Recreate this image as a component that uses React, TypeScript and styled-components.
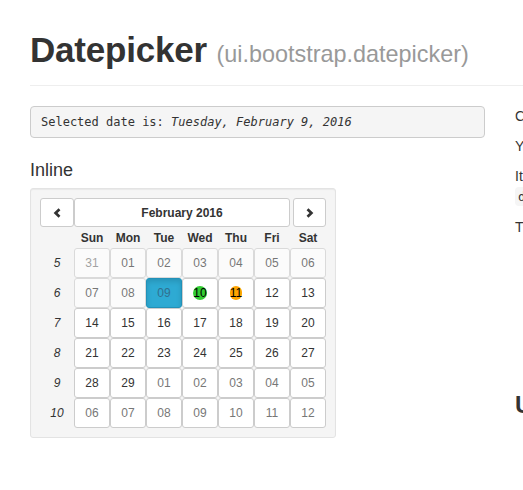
import React from "react";
import styled, { createGlobalStyle, css } from "styled-components";

const GlobalStyle = createGlobalStyle`
  html, body {
    margin: 0;
    overflow: hidden;
  }
  body {
    font-family: "Liberation Sans", Helvetica, Arial, sans-serif;
    font-size: 14px;
    line-height: 20px;
    color: #333;
    background: #fff;
  }
  * {
    box-sizing: border-box;
  }
`;

const Page = styled.div`
  width: 1000px;
  padding: 30px 0 0 30px;
`;

const PageHeader = styled.div`
  padding-bottom: 15px;
  margin-bottom: 20px;
  border-bottom: 1px solid #eee;
`;

const Title = styled.h1`
  margin: 0;
  height: 40px;
  font-size: 35px;
  line-height: 40px;
  font-weight: bold;
  color: #333;
  letter-spacing: -0.2px;

  small {
    font-size: 23.4px;
    line-height: 1;
    font-weight: normal;
    letter-spacing: 0;
    color: #999;
  }
`;

const Row = styled.div`
  display: flex;
  align-items: flex-start;
  gap: 30px;
`;

const Column = styled.div`
  flex: none;
  width: 455px;
`;

const Pre = styled.pre`
  margin: 0;
  padding: 6px 10px;
  background: #f5f5f5;
  border: 1px solid #ccc;
  border-radius: 4px;
  font-family: "DejaVu Sans Mono", Menlo, monospace;
  font-size: 12px;
  line-height: 18px;
  color: #333;
`;

const SectionTitle = styled.h4`
  margin: 22px 0 8px;
  font-size: 18px;
  line-height: 20px;
  font-weight: 500;
`;

const Well = styled.div`
  display: inline-block;
  padding: 9px;
  background: #f5f5f5;
  border: 1px solid #e3e3e3;
  border-radius: 3px;
  box-shadow: inset 0 1px 1px rgba(0, 0, 0, 0.05);
`;

const Calendar = styled.div`
  display: grid;
  grid-template-columns: 34px repeat(7, 36px);
  grid-template-rows: 30px 20px repeat(6, 30px);
`;

const buttonBase = css`
  margin: 0;
  padding: 0;
  background: #fff;
  border: 1px solid #ccc;
  border-radius: 3px;
  font-family: inherit;
  font-size: 12px;
  color: #333;
  cursor: pointer;
`;

const NavButton = styled.button<{ $side: "left" | "right" }>`
  ${buttonBase}
  height: 29px;
  width: ${({ $side }) => ($side === "left" ? "34px" : "33px")};
  justify-self: ${({ $side }) => ($side === "left" ? "start" : "end")};
  display: flex;
  align-items: center;
  justify-content: center;
  padding-top: 1px;
`;

const MonthButton = styled.button`
  ${buttonBase}
  grid-column: span 6;
  height: 29px;
  font-weight: bold;
`;

const DayName = styled.div`
  font-size: 12px;
  font-weight: bold;
  line-height: 20px;
  text-align: center;
`;

const WeekNum = styled.em`
  display: flex;
  align-items: center;
  justify-content: center;
  font-size: 12px;
`;

const DayButton = styled.button<{ $active?: boolean; $disabled?: boolean }>`
  ${buttonBase}
  width: 36px;
  height: 30px;
  ${({ $disabled }) => $disabled && "opacity: 0.65; cursor: not-allowed;"}
  ${({ $active }) =>
    $active &&
    css`
      background: #2eaad3;
      border-color: #2291b8;
      box-shadow: inset 0 3px 5px rgba(0, 0, 0, 0.125);
    `}
`;

const tones = {
  normal: "#333",
  muted: "#777",
  info: "#31708f",
};

const marks = {
  full: "limegreen",
  partially: "orange",
};

const DayLabel = styled.span<{
  $tone: keyof typeof tones;
  $mark?: keyof typeof marks;
}>`
  color: ${({ $tone }) => tones[$tone]};
  ${({ $mark }) =>
    $mark &&
    css`
      background: ${marks[$mark]};
      border-radius: 32px;
      color: #000;
    `}
`;

const Text = styled.p`
  margin: 0 0 10px;
  white-space: nowrap;
`;

const Code = styled.code`
  padding: 2px 3px;
  font-family: "DejaVu Sans Mono", Menlo, monospace;
  font-size: 90%;
  color: #333;
  background: #f5f5f5;
  border-radius: 4px;
`;

const List = styled.ul`
  margin: 0 0 10px;
  padding-left: 40px;
`;

const SubTitle = styled.h3`
  margin: 25px 0 10px;
  font-size: 24px;
  line-height: 26px;
  font-weight: bold;
`;

const Chevron = ({ dir }: { dir: "left" | "right" }) => (
  <svg width="9" height="10" viewBox="0 0 9 10">
    <polyline
      points={dir === "left" ? "6.5,1.3 2.6,5 6.5,8.7" : "2.5,1.3 6.4,5 2.5,8.7"}
      fill="none"
      stroke="#333"
      strokeWidth="2.7"
    />
  </svg>
);

const dayNames = ["Sun", "Mon", "Tue", "Wed", "Thu", "Fri", "Sat"];

interface Day {
  date: Date;
  label: string;
  muted: boolean;
  disabled: boolean;
  active: boolean;
  mark?: keyof typeof marks;
}

const buildWeeks = () => {
  const start = new Date(2016, 0, 31);
  const minDate = new Date(2016, 1, 9);
  const weeks: { num: number; days: Day[] }[] = [];
  for (let w = 0; w < 6; w++) {
    const days: Day[] = [];
    for (let d = 0; d < 7; d++) {
      const date = new Date(start);
      date.setDate(start.getDate() + w * 7 + d);
      const inMonth = date.getMonth() === 1;
      const n = date.getDate();
      days.push({
        date,
        label: String(n).padStart(2, "0"),
        muted: !inMonth,
        disabled: date < minDate,
        active: inMonth && n === 9,
        mark: inMonth && n === 10 ? "full" : inMonth && n === 11 ? "partially" : undefined,
      });
    }
    weeks.push({ num: 5 + w, days });
  }
  return weeks;
};

const weeks = buildWeeks();

export default function App() {
  return (
    <>
      <GlobalStyle />
      <Page>
        <PageHeader>
          <Title>
            Datepicker <small>(ui.bootstrap.datepicker)</small>
          </Title>
        </PageHeader>
        <Row>
          <Column>
            <Pre>
              Selected date is: <em>Tuesday, February 9, 2016</em>
            </Pre>
            <SectionTitle>Inline</SectionTitle>
            <Well>
              <Calendar>
                <NavButton $side="left">
                  <Chevron dir="left" />
                </NavButton>
                <MonthButton>February 2016</MonthButton>
                <NavButton $side="right">
                  <Chevron dir="right" />
                </NavButton>
                <div />
                {dayNames.map((name) => (
                  <DayName key={name}>{name}</DayName>
                ))}
                {weeks.map((week) => (
                  <React.Fragment key={week.num}>
                    <WeekNum>{week.num}</WeekNum>
                    {week.days.map((day) => (
                      <DayButton
                        key={day.date.toISOString()}
                        $active={day.active}
                        $disabled={day.disabled}
                      >
                        <DayLabel
                          $tone={day.active ? "info" : day.muted ? "muted" : "normal"}
                          $mark={day.mark}
                        >
                          {day.label}
                        </DayLabel>
                      </DayButton>
                    ))}
                  </React.Fragment>
                ))}
              </Calendar>
            </Well>
          </Column>
          <Column>
            <Text>Clean, flexible, and fully customizable date picker.</Text>
            <Text>You can navigate through days, months and years.</Text>
            <Text>
              It comes in two flavours, the inline one shown here and the
              <br />
              <Code>datepicker-popup</Code> directive, which attaches it to an input.
            </Text>
            <Text>The datepicker has 3 modes:</Text>
            <List>
              <li>day - shows 6 weeks around the current month</li>
              <li>month - shows the 12 months of a year</li>
              <li>year - shows 20 years around the current one</li>
              <li>minMode sets the lowest mode</li>
              <li>maxMode sets the highest mode</li>
              <li>showWeeks toggles the week numbers</li>
            </List>
            <SubTitle>Usage</SubTitle>
          </Column>
        </Row>
      </Page>
    </>
  );
}
